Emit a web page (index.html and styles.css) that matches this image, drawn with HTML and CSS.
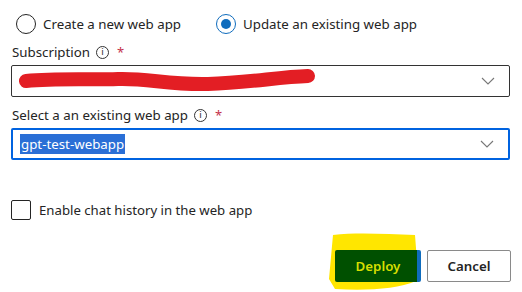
FILE: index.html
```html
<!DOCTYPE html>
<html>
<head>
<meta charset="utf-8">
<link rel="stylesheet" href="styles.css">
</head>
<body>
<div class="panel">
  <div class="radios">
    <label class="radio"><span class="circle"></span><span>Create a new web app</span></label>
    <label class="radio"><span class="circle checked"></span><span>Update an existing web app</span></label>
  </div>
  <div class="field">
    <div class="label">Subscription <span class="info">i</span> <span class="req">*</span></div>
    <div class="select">
      <span class="value"></span>
      <svg class="chev" width="14" height="8" viewBox="0 0 14 8"><path d="M1 1l6 6 6-6" fill="none" stroke="#777" stroke-width="1.1"/></svg>
      <svg class="scribble" width="300" height="30" viewBox="0 0 300 30"><path d="M8 14 C40 11 70 13 100 12 C130 11 150 18 190 17 C230 16 260 10 290 9" fill="none" stroke="#e31e24" stroke-width="14" stroke-linecap="round"/></svg>
    </div>
  </div>
  <div class="field second">
    <div class="label">Select a an existing web app <span class="info">i</span> <span class="req">*</span></div>
    <div class="select focused">
      <span class="value"><span class="sel">gpt-test-webapp</span></span>
      <svg class="chev" width="14" height="8" viewBox="0 0 14 8"><path d="M1 1l6 6 6-6" fill="none" stroke="#777" stroke-width="1.1"/></svg>
    </div>
  </div>
  <label class="check"><span class="box"></span><span>Enable chat history in the web app</span></label>
  <div class="actions">
    <div class="deploy-wrap">
      <svg class="hl" width="96" height="62" viewBox="0 0 96 62"><path d="M6 4 C30 1 60 3 88 4 L90 30 L89 50 C70 58 40 60 8 58 L2 48 Z" fill="#ffe600"/></svg>
      <button class="btn primary">Deploy</button>
    </div>
    <button class="btn secondary">Cancel</button>
  </div>
</div>
</body>
</html>
```
FILE: styles.css
```css
* { box-sizing: border-box; }
body { margin: 0; background: #fff; font-family: "Noto Sans", "Liberation Sans", sans-serif; font-size: 13.2px; color: #242424; }
.panel { width: 522px; height: 292px; padding: 12px 12px 0 11px; display: flex; flex-direction: column; }
.radios { display: flex; gap: 35px; padding-left: 5px; height: 24px; align-items: center; }
.radio { display: flex; align-items: center; gap: 7px; font-size: 13.3px; }
.circle { width: 20px; height: 20px; border: 1px solid #242424; border-radius: 50%; display: inline-block; position: relative; }
.circle.checked { border-color: #0f6cbd; }
.circle.checked::after { content: ""; position: absolute; left: 4px; top: 4px; width: 10px; height: 10px; border-radius: 50%; background: #0f6cbd; }
.field { display: flex; flex-direction: column; }
.field.second { margin-top: 2px; }
.label { height: 20px; margin-top: 6px; margin-bottom: 3px; display: flex; align-items: center; gap: 5px; padding-left: 1px; font-size: 13.3px; }
.info { width: 13px; height: 13px; border: 1px solid #333; border-radius: 50%; font-size: 9px; line-height: 11px; text-align: center; font-family: "DejaVu Sans", sans-serif; margin-left: 1px; }
.req { color: #c4314b; margin-left: 3px; font-size: 13px; }
.select { position: relative; height: 32px; width: 499px; border: 1px solid #333; border-radius: 2px; display: flex; align-items: center; justify-content: space-between; padding: 0 14px 0 8px; }
.select.focused { border: 2px solid #0063e0; padding-left: 7px; }
.sel { background: #2a6fd6; color: #fff; padding: 1px 1px; font-size: 13.3px; }
.chev { display: block; }
.scribble { position: absolute; left: 6px; top: 1px; }
.check { display: flex; align-items: center; gap: 8px; margin-top: 40px; height: 20px; font-size: 13.2px; }
.box { width: 20px; height: 20px; border: 1px solid #242424; border-radius: 2px; display: inline-block; }
.actions { display: flex; justify-content: flex-end; gap: 6px; margin-top: 30px; width: 500px; }
.deploy-wrap { position: relative; }
.hl { position: absolute; left: -8px; top: -19px; }
.btn { position: relative; height: 32px; font-family: inherit; font-size: 13.3px; font-weight: 600; border-radius: 2px; cursor: pointer; }
.primary { width: 86px; background: linear-gradient(to right, #005000 0, #005000 82px, #0f6cbd 82px); color: #d6df00; border: none; }
.secondary { width: 84px; background: #fff; color: #242424; border: 1px solid #8a8a8a; }
```
